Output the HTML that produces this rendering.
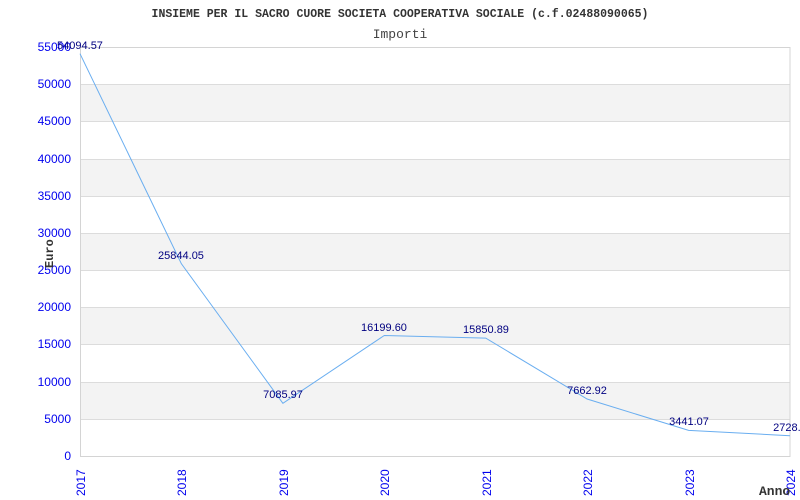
<!DOCTYPE html>
<html><head><meta charset="utf-8"><style>body{margin:0;background:#fff}svg{display:block}</style></head><body>
<svg width="800" height="500" xmlns="http://www.w3.org/2000/svg">
<rect width="800" height="500" fill="#fff"/>
<g fill="#f3f3f3">
<rect x="80" y="84" width="710" height="37"/><rect x="80" y="159" width="710" height="37"/><rect x="80" y="233" width="710" height="37"/><rect x="80" y="307" width="710" height="37"/><rect x="80" y="382" width="710" height="37"/>
</g>
<g stroke="#dcdcdc" stroke-width="1">
<line x1="80" y1="84.5" x2="790" y2="84.5"/><line x1="80" y1="121.5" x2="790" y2="121.5"/><line x1="80" y1="159.5" x2="790" y2="159.5"/><line x1="80" y1="196.5" x2="790" y2="196.5"/><line x1="80" y1="233.5" x2="790" y2="233.5"/><line x1="80" y1="270.5" x2="790" y2="270.5"/><line x1="80" y1="307.5" x2="790" y2="307.5"/><line x1="80" y1="344.5" x2="790" y2="344.5"/><line x1="80" y1="382.5" x2="790" y2="382.5"/><line x1="80" y1="419.5" x2="790" y2="419.5"/>
</g>
<rect x="80.5" y="47.5" width="709.5" height="409" fill="none" stroke="#d4d4d4"/>
<text x="400" y="17" text-anchor="middle" font-family="Liberation Mono, monospace" font-weight="bold" font-size="11.5" fill="#333">INSIEME PER IL SACRO CUORE SOCIETA COOPERATIVA SOCIALE (c.f.02488090065)</text>
<text x="400" y="38" text-anchor="middle" font-family="Liberation Mono, monospace" font-size="13" fill="#444">Importi</text>
<g font-family="Liberation Sans, sans-serif" font-size="12" fill="#0000ee" text-anchor="end">
<text x="71" y="51">55000</text><text x="71" y="88">50000</text><text x="71" y="125">45000</text><text x="71" y="163">40000</text><text x="71" y="200">35000</text><text x="71" y="237">30000</text><text x="71" y="274">25000</text><text x="71" y="311">20000</text><text x="71" y="348">15000</text><text x="71" y="386">10000</text><text x="71" y="423">5000</text><text x="71" y="460">0</text>
</g>
<g font-family="Liberation Sans, sans-serif" font-size="12" fill="#0000ee">
<text transform="translate(85,496) rotate(-90)">2017</text>
<text transform="translate(186,496) rotate(-90)">2018</text>
<text transform="translate(288,496) rotate(-90)">2019</text>
<text transform="translate(389,496) rotate(-90)">2020</text>
<text transform="translate(491,496) rotate(-90)">2021</text>
<text transform="translate(592,496) rotate(-90)">2022</text>
<text transform="translate(694,496) rotate(-90)">2023</text>
<text transform="translate(795,496) rotate(-90)">2024</text>
</g>
<text transform="translate(53,268) rotate(-90)" font-family="Liberation Mono, monospace" font-weight="bold" font-size="12" fill="#333">Euro</text>
<text x="759" y="495" font-family="Liberation Mono, monospace" font-weight="bold" font-size="13" fill="#333">Anno</text>
<polyline fill="none" stroke="#6aaef0" stroke-width="1" points="80,53.7 181.4,263.8 282.9,403.3 384.3,335.5 485.7,338.1 587.1,399 688.6,430.4 790,435.7"/>
<g font-family="Liberation Sans, sans-serif" font-size="11" fill="#000080" text-anchor="middle">
<text x="80" y="49">54094.57</text><text x="181" y="259">25844.05</text><text x="283" y="398">7085.97</text><text x="384" y="331">16199.60</text><text x="486" y="333">15850.89</text><text x="587" y="394">7662.92</text><text x="689" y="425">3441.07</text><text x="790" y="431">2728.1</text>
</g>
</svg>
</body></html>
